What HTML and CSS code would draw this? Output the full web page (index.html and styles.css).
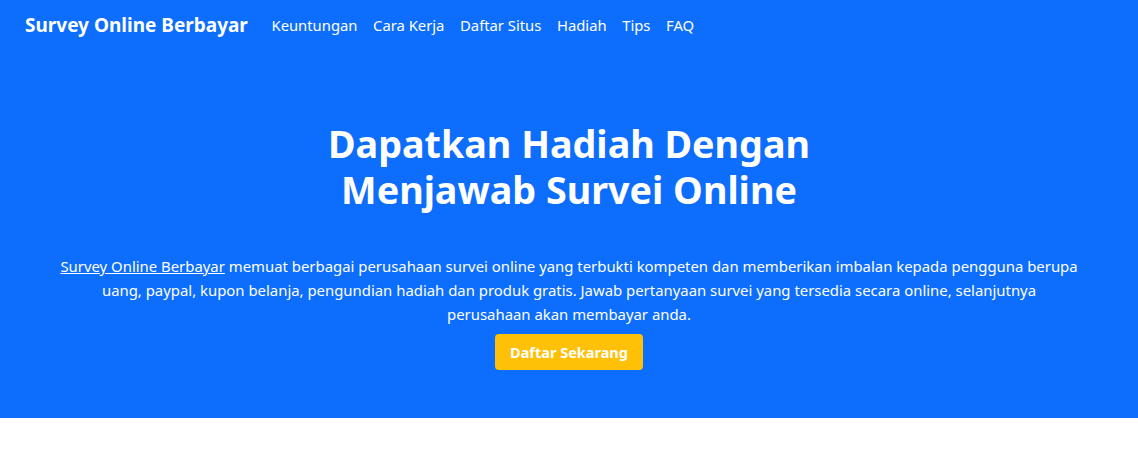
FILE: index.html
```html
<!DOCTYPE html>
<html lang="id">
<head>
<meta charset="utf-8">
<title>Survey Online Berbayar</title>
<link rel="stylesheet" href="styles.css">
</head>
<body>
<header class="hero">
  <nav class="navbar">
    <a class="brand" href="#">Survey Online Berbayar</a>
    <ul class="nav">
      <li><a href="#">Keuntungan</a></li>
      <li><a href="#">Cara Kerja</a></li>
      <li><a href="#">Daftar Situs</a></li>
      <li><a href="#">Hadiah</a></li>
      <li><a href="#">Tips</a></li>
      <li><a href="#">FAQ</a></li>
    </ul>
  </nav>
  <section class="intro">
    <h1 class="title">Dapatkan Hadiah Dengan<br>Menjawab Survei Online</h1>
    <p class="lead"><a href="#">Survey Online Berbayar</a> memuat berbagai perusahaan survei online yang terbukti kompeten dan memberikan imbalan kepada pengguna berupa uang, paypal, kupon belanja, pengundian hadiah dan produk gratis. Jawab pertanyaan survei yang tersedia secara online, selanjutnya perusahaan akan membayar anda.</p>
    <a class="btn" href="#">Daftar Sekarang</a>
  </section>
</header>
</body>
</html>
```
FILE: styles.css
```css
* { box-sizing: border-box; }
html, body { margin: 0; padding: 0; }
body {
  font-family: "Noto Sans", "Open Sans", sans-serif;
  color: #212529;
  background: #fff;
}
.hero {
  background: #0d6efd;
  color: #fff;
  height: 418px;
}
.navbar {
  display: flex;
  align-items: center;
  padding: 6px 25px 8px;
  height: 52px;
}
.brand {
  color: #fff;
  text-decoration: none;
  font-weight: 700;
  font-size: 19px;
  margin-right: 16px;
}
.nav {
  display: flex;
  list-style: none;
  margin: 0;
  padding: 0;
}
.nav a {
  display: block;
  color: #fff;
  text-decoration: none;
  font-size: 14.8px;
  padding: 0 8px;
  margin-left: -0.4px;
}
.intro {
  display: flex;
  flex-direction: column;
  align-items: center;
  text-align: center;
  padding: 69px 40px 0;
}
.title {
  margin: 0;
  font-size: 37.7px;
  line-height: 46px;
  font-weight: 700;
}
.lead {
  margin: 41px 0 8px;
  max-width: 1019px;
  font-size: 14.9px;
  line-height: 24px;
}
.lead a { color: #fff; }
.btn {
  display: inline-block;
  background: #ffc107;
  color: #fff;
  font-weight: 700;
  font-size: 14.5px;
  text-decoration: none;
  padding: 8px 15px;
  border-radius: 4px;
  line-height: 20px;
}
```
